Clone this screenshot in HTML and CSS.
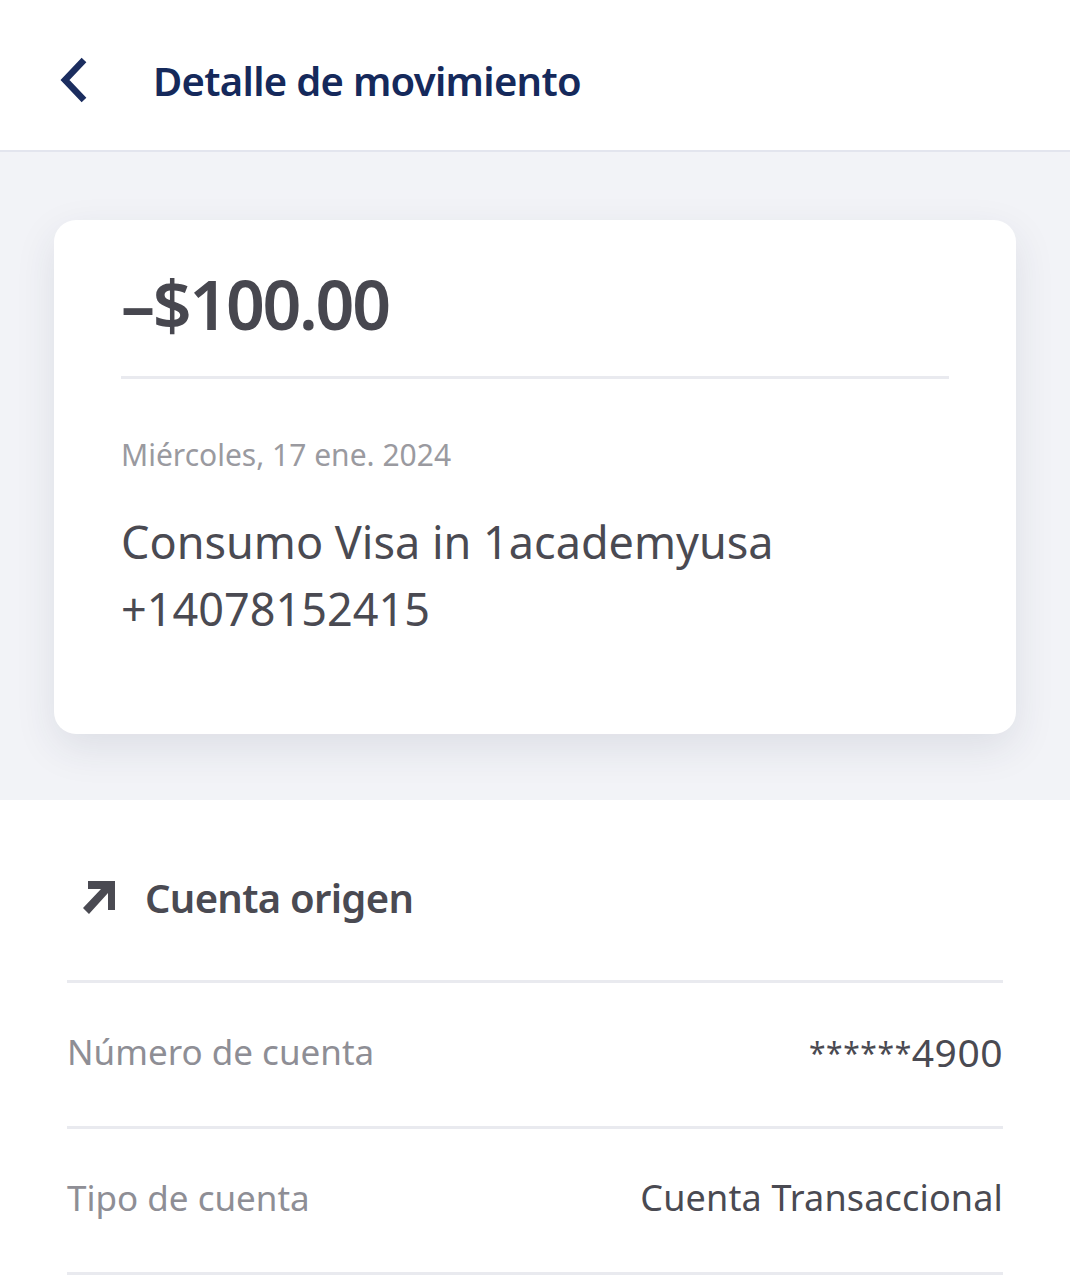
FILE: index.html
```html
<!DOCTYPE html>
<html lang="es">
<head>
  <meta charset="UTF-8" />
  <title>Detalle de movimiento</title>
  <link rel="stylesheet" href="styles.css">
</head>
<body>
  <header class="topbar">
    <svg class="back" width="34" height="48" viewBox="0 0 34 48">
      <path d="M26 4 L7 24 L26 44" fill="none" stroke="#1b2d5f" stroke-width="6.5" stroke-linecap="butt" stroke-linejoin="miter"/>
    </svg>
    <h1>Detalle de movimiento</h1>
  </header>

  <section class="summary">
    <div class="card">
      <div class="amount">–$100.00</div>
      <div class="card-line"></div>
      <div class="date">Miércoles, 17 ene. 2024</div>
      <div class="desc">Consumo Visa in 1academyusa<br>+14078152415</div>
    </div>
  </section>

  <section class="details">
    <div class="details-title">
      <svg width="36" height="36" viewBox="0 0 36 36">
        <path d="M6 2 H33 V31 H26 V14 L7 35 L1 29 L19 10 H6 Z" fill="#4a4a52"/>
      </svg>
      <h2>Cuenta origen</h2>
    </div>
    <div class="row">
      <span class="label">Número de cuenta</span>
      <span class="value num"><span class="stars">******</span>4900</span>
    </div>
    <div class="row">
      <span class="label">Tipo de cuenta</span>
      <span class="value">Cuenta Transaccional</span>
    </div>
  </section>
</body>
</html>
```

FILE: styles.css
```css
body {
  margin: 0;
  font-family: 'Noto Sans', 'Open Sans', sans-serif;
  background: #ffffff;
  color: #4a4a52;
}
.topbar {
  height: 152px;
  box-sizing: border-box;
  display: flex;
  align-items: center;
  border-bottom: 2px solid #e3e5ee;
  padding: 10px 0 0 58px;
}
.back {
  display: block;
  margin-right: 61px;
}
.topbar h1 {
  margin: 0;
  font-size: 40px;
  font-weight: 600;
  color: #15295b;
  letter-spacing: -0.7px;
}
.summary {
  background: #f2f3f7;
  padding: 68px 54px 66px;
}
.card {
  background: #fff;
  border-radius: 22px;
  box-shadow: 0 14px 40px rgba(40, 45, 80, 0.10);
  height: 514px;
  box-sizing: border-box;
  padding: 44px 67px 0;
}
.amount {
  font-size: 68px;
  font-weight: 600;
  line-height: 80px;
  letter-spacing: -2.3px;
  color: #47474f;
}
.card-line {
  height: 3px;
  background: #e9eaef;
  margin-top: 32px;
}
.date {
  margin-top: 55px;
  font-size: 30px;
  color: #9a9aa0;
}
.desc {
  margin-top: 33px;
  font-size: 45px;
  line-height: 67px;
  color: #4a4a52;
}
.details {
  padding: 58px 67px 0;
}
.details-title {
  display: flex;
  align-items: center;
  padding-left: 15px;
  height: 78px;
  padding-bottom: 44px;
  border-bottom: 3px solid #e9eaef;
}
.details-title svg {
  margin-right: 27px;
}
.details-title h2 {
  margin: 0;
  font-size: 40px;
  font-weight: 600;
  letter-spacing: -0.7px;
}
.row {
  height: 146px;
  box-sizing: border-box;
  padding-bottom: 6px;
  display: flex;
  justify-content: space-between;
  align-items: center;
  border-bottom: 3px solid #e9eaef;
  font-size: 35px;
}
.label {
  color: #8e8e95;
}
.value {
  color: #4a4a52;
  font-size: 36px;
  letter-spacing: 0.15px;
}
.value.num {
  font-size: 39px;
  letter-spacing: 0.5px;
}
.stars {
  font-size: 30px;
  letter-spacing: 0.6px;
  vertical-align: 3px;
}
```
